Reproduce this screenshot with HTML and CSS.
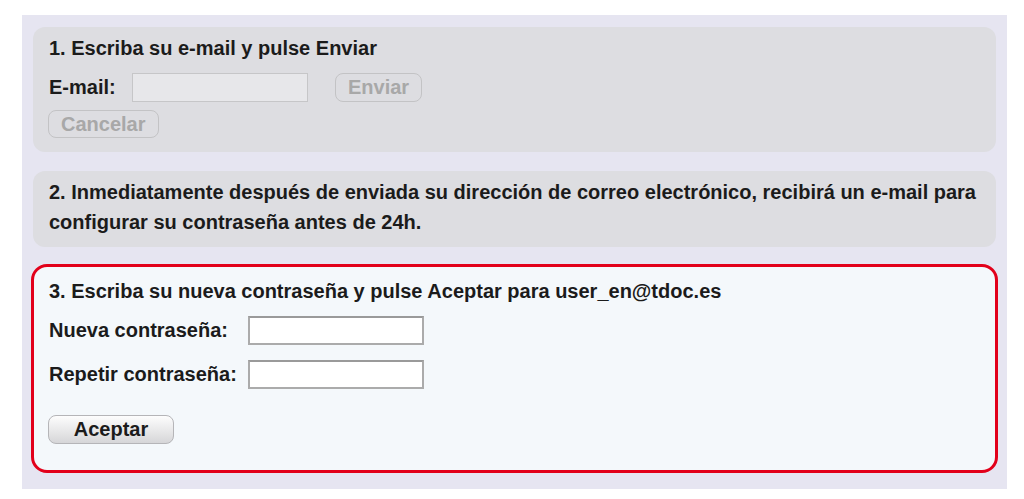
FILE: index.html
```html
<!DOCTYPE html>
<html lang="es">
<head>
  <meta charset="UTF-8" />
  <title>Recuperar contraseña</title>
  <link rel="stylesheet" href="styles.css">
</head>
<body>
  <div class="panel">

    <div class="step step-off">
      <div class="step-title">1. Escriba su e-mail y pulse <b>Enviar</b></div>
      <div class="row">
        <label for="email">E-mail:</label>
        <input type="text" id="email" class="field-off" disabled />
        <button class="btn-off send" disabled>Enviar</button>
      </div>
      <div class="row">
        <button class="btn-off" disabled>Cancelar</button>
      </div>
    </div>

    <div class="step step-off">
      <div class="step-title">2. Inmediatamente después de enviada su dirección de correo electrónico, recibirá un e-mail para configurar su contraseña antes de 24h.</div>
    </div>

    <div class="step step-on">
      <div class="step-title">3. Escriba su nueva contraseña y pulse Aceptar para user_en@tdoc.es</div>
      <div class="pass-grid">
        <label for="pass1">Nueva contraseña:</label>
        <input type="password" id="pass1" class="field" />
        <label for="pass2">Repetir contraseña:</label>
        <input type="password" id="pass2" class="field" />
      </div>
      <button class="btn-ok">Aceptar</button>
    </div>

  </div>
</body>
</html>
```

FILE: styles.css
```css
body {
  margin: 0;
  background: #fff;
  font-family: "Liberation Sans", Arial, sans-serif;
  font-size: 20px;
  font-weight: bold;
  color: #1b1b1b;
}
.panel {
  width: 963px;
  margin: 15px 0 0 22px;
  padding: 12px 11px 16px;
  background: #e6e5f1;
}
.step {
  border-radius: 12px;
  padding: 6px 16px 14px;
}
.step + .step {
  margin-top: 19px;
}
.step-off {
  background: #dddde1;
}
.step-off:nth-child(2) {
  padding-bottom: 10px;
}
.step + .step-on {
  margin: 17px -2px 0;
  padding: 9px 16px 26px 15px;
  background: #f4f8fb;
  border: 3px solid #e2001a;
  border-radius: 16px;
}
.step-title {
  line-height: 30px;
}
.row {
  display: flex;
  align-items: center;
  margin-top: 10px;
}
.row + .row {
  margin-top: 8px;
}
.row label {
  width: 83px;
}
.field-off {
  width: 176px;
  height: 29px;
  box-sizing: border-box;
  background: #e7e7ea;
  border: 1px solid #c6c6c8;
}
.btn-off {
  font-family: inherit;
  font-size: 20px;
  font-weight: bold;
  color: #a8a8a8;
  background: transparent;
  border: 1.5px solid #c3c3c5;
  border-radius: 8px;
  height: 28px;
  padding: 0 12px;
  margin-left: -1px;
}
.btn-off.send {
  margin-left: 27px;
  height: 29px;
}
.pass-grid {
  display: grid;
  grid-template-columns: max-content 176px;
  column-gap: 11px;
  row-gap: 15px;
  align-items: center;
  margin-top: 10px;
}
.field {
  height: 29px;
  box-sizing: border-box;
  background: #fff;
  border: 2px solid #ababab;
  border-top-color: #9a9a9a;
}
.btn-ok {
  display: block;
  margin: 26px 0 0 -1px;
  width: 126px;
  height: 29px;
  font-family: inherit;
  font-size: 20px;
  font-weight: bold;
  color: #1b1b1b;
  background: linear-gradient(#fdfdfd, #d6d6d8);
  border: 1px solid #b5b5b8;
  border-radius: 8px;
  padding: 0;
}
```
